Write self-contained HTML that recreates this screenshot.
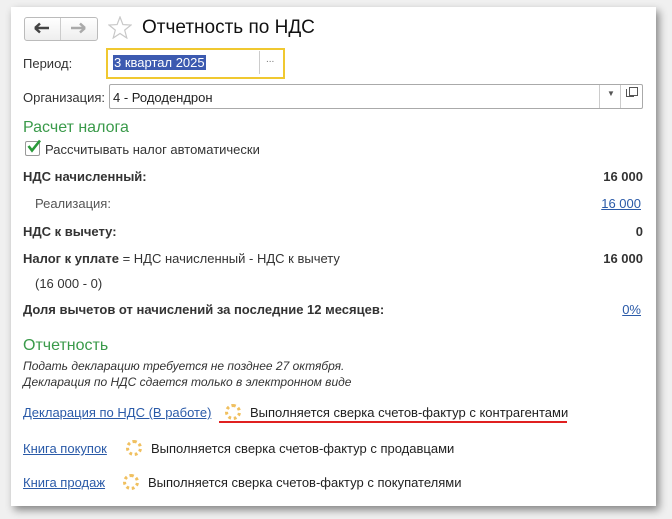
<!DOCTYPE html>
<html><head><meta charset="utf-8"><style>
body{margin:0;width:672px;height:519px;background:#f0f0f0;font-family:"Liberation Sans",sans-serif;font-size:13px;color:#333;position:relative;overflow:hidden}
.panel{position:absolute;left:11px;top:7px;width:645px;height:499px;background:#fff;box-shadow:3px 4px 8px rgba(0,0,0,.45)}
.a{position:absolute;white-space:nowrap}
.b{font-weight:bold}
.lnk{color:#2a5aa8;text-decoration:underline}
.g{color:#3a9a4a;font-size:16px}
.spin{position:absolute;width:10px;height:10px;border:3px dotted #f0c060;border-radius:50%}
</style></head><body>
<div class="panel"></div>
<div class="a" style="left:24px;top:17px;width:72px;height:22px;border:1px solid #bbb;border-radius:3px;background:linear-gradient(#fff,#eee)"></div>
<div class="a" style="left:60px;top:18px;width:1px;height:22px;background:#ccc"></div>
<svg class="a" style="left:34px;top:22px" width="16" height="12"><path d="M1 6H15M1 6L6 1.5M1 6L6 10.5" stroke="#444" stroke-width="2.5" fill="none"/></svg>
<svg class="a" style="left:70px;top:22px" width="16" height="12"><path d="M1 6H15M15 6L10 1.5M15 6L10 10.5" stroke="#aaa" stroke-width="2.5" fill="none"/></svg>
<svg class="a" style="left:108px;top:16px" width="24" height="23"><path d="M12 1L14.9 8.6 23 9 16.7 14.1 18.8 22 12 17.5 5.2 22 7.3 14.1 1 9 9.1 8.6Z" fill="none" stroke="#c8c8c8" stroke-width="1.2"/></svg>
<div class="a" style="left:142px;top:17px;font-size:19px;color:#111">Отчетность по НДС</div>
<div class="a" style="left:23px;top:56px">Период:</div>
<div class="a" style="left:106px;top:48px;width:175px;height:27px;border:2px solid #f0c830;box-sizing:content-box"></div>
<div class="a" style="left:259px;top:51px;width:1px;height:23px;background:#ccc"></div>
<div class="a" style="left:266px;top:54px;font-size:10px;color:#777">...</div>
<div class="a" style="left:113px;top:55px;background:#3c5ab0;color:#fff;padding:0 1px">3 квартал 2025</div>
<div class="a" style="left:23px;top:90px">Организация:</div>
<div class="a" style="left:109px;top:84px;width:532px;height:23px;border:1px solid #aaa;border-radius:2px"></div>
<div class="a" style="left:599px;top:85px;width:1px;height:23px;background:#ccc"></div>
<div class="a" style="left:620px;top:85px;width:1px;height:23px;background:#ccc"></div>
<div class="a" style="left:607px;top:89px;font-size:8px;color:#555">▼</div>
<div class="a" style="left:626px;top:89px;width:7px;height:7px;border:1px solid #555;border-right:none;border-top:none"></div>
<div class="a" style="left:629px;top:87px;width:7px;height:7px;border:1px solid #555;background:#fff"></div>
<div class="a" style="left:113px;top:90px;color:#222">4 - Рододендрон</div>
<div class="a g" style="left:23px;top:119px">Расчет налога</div>
<div class="a" style="left:25px;top:141px;width:13px;height:13px;border:1px solid #999;border-radius:2px"></div>
<svg class="a" style="left:26px;top:138px" width="16" height="16"><path d="M2.5 8L6 12.5L14 2.5" stroke="#2a9a3a" stroke-width="2.6" fill="none"/></svg>
<div class="a" style="left:45px;top:142px">Рассчитывать налог автоматически</div>
<div class="a b" style="left:23px;top:169px">НДС начисленный:</div>
<div class="a b" style="right:29px;top:169px">16 000</div>
<div class="a" style="left:35px;top:196px;color:#555">Реализация:</div>
<div class="a lnk" style="right:31px;top:196px">16 000</div>
<div class="a b" style="left:23px;top:224px">НДС к вычету:</div>
<div class="a b" style="right:29px;top:224px">0</div>
<div class="a" style="left:23px;top:251px"><b>Налог к уплате</b> = НДС начисленный - НДС к вычету</div>
<div class="a b" style="right:29px;top:251px">16 000</div>
<div class="a" style="left:35px;top:276px">(16 000 - 0)</div>
<div class="a b" style="left:23px;top:302px">Доля вычетов от начислений за последние 12 месяцев:</div>
<div class="a lnk" style="right:31px;top:302px">0%</div>
<div class="a g" style="left:23px;top:337px">Отчетность</div>
<div class="a" style="left:23px;top:359px;font-style:italic;font-size:12px">Подать декларацию требуется не позднее 27 октября.</div>
<div class="a" style="left:23px;top:375px;font-style:italic;font-size:12px">Декларация по НДС сдается только в электронном виде</div>
<div class="a lnk" style="left:23px;top:405px">Декларация по НДС (В работе)</div>
<div class="spin" style="left:225px;top:404px"></div>
<div class="a" style="left:250px;top:405px;color:#222">Выполняется сверка счетов-фактур с контрагентами</div>
<div class="a" style="left:219px;top:421px;width:348px;height:2px;background:#e02020"></div>
<div class="a lnk" style="left:23px;top:441px">Книга покупок</div>
<div class="spin" style="left:126px;top:440px"></div>
<div class="a" style="left:151px;top:441px;color:#222">Выполняется сверка счетов-фактур с продавцами</div>
<div class="a lnk" style="left:23px;top:475px">Книга продаж</div>
<div class="spin" style="left:123px;top:474px"></div>
<div class="a" style="left:148px;top:475px;color:#222">Выполняется сверка счетов-фактур с покупателями</div>
</body></html>
